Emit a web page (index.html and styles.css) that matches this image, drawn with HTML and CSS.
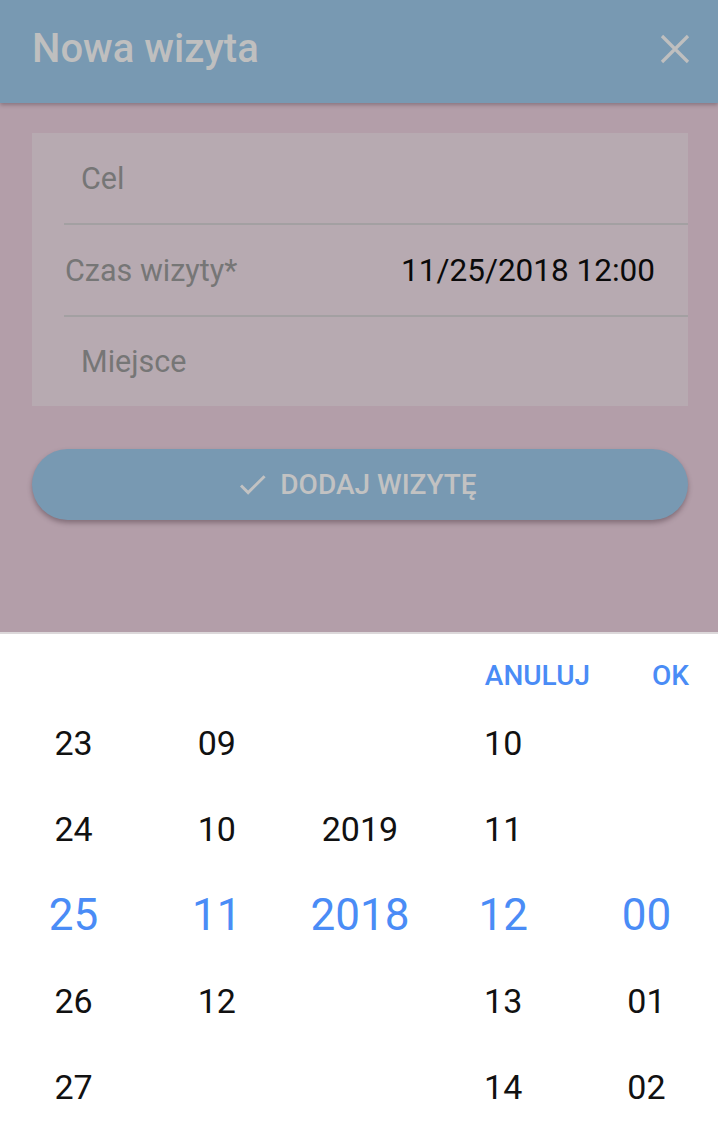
FILE: index.html
```html
<!DOCTYPE html>
<html lang="pl">
<head>
<meta charset="utf-8">
<title>Nowa wizyta</title>
<link rel="stylesheet" href="styles.css">
</head>
<body>
<div class="app">
  <header class="topbar">
    <h1 class="title">Nowa wizyta</h1>
    <svg class="close" viewBox="0 0 30 30" width="30" height="30" aria-hidden="true">
      <path d="M2 2 L28 28 M28 2 L2 28" stroke="currentColor" stroke-width="3.2" fill="none"/>
    </svg>
  </header>
  <main class="content">
    <section class="card">
      <div class="row"><span class="placeholder">Cel</span></div>
      <div class="divider"></div>
      <div class="row row-field"><span class="label">Czas wizyty*</span><span class="value">11/25/2018 12:00</span></div>
      <div class="divider"></div>
      <div class="row row-last"><span class="placeholder">Miejsce</span></div>
    </section>
    <button class="submit" type="button">
      <svg class="check" viewBox="0 0 24 24" width="35" height="35" aria-hidden="true">
        <path d="M9 16.17L4.83 12l-1.42 1.41L9 19 21 7l-1.41-1.41z" fill="currentColor"/>
      </svg>
      <span>DODAJ WIZYTĘ</span>
    </button>
  </main>
  <section class="sheet">
    <div class="actions">
      <span class="action">ANULUJ</span>
      <span class="action">OK</span>
    </div>
    <div class="picker">
      <span class="cell">23</span><span class="cell">09</span><span class="cell"></span><span class="cell">10</span><span class="cell"></span>
      <span class="cell">24</span><span class="cell">10</span><span class="cell">2019</span><span class="cell">11</span><span class="cell"></span>
      <span class="cell sel">25</span><span class="cell sel">11</span><span class="cell sel">2018</span><span class="cell sel">12</span><span class="cell sel">00</span>
      <span class="cell">26</span><span class="cell">12</span><span class="cell"></span><span class="cell">13</span><span class="cell">01</span>
      <span class="cell">27</span><span class="cell"></span><span class="cell"></span><span class="cell">14</span><span class="cell">02</span>
    </div>
  </section>
</div>
</body>
</html>
```
FILE: styles.css
```css
* { box-sizing: border-box; }
html, body { margin: 0; padding: 0; }
body {
  width: 718px;
  height: 1148px;
  overflow: hidden;
  font-family: Roboto, "Noto Sans", sans-serif;
  background: #b39ea9;
}
.app {
  display: flex;
  flex-direction: column;
  height: 1148px;
}
.topbar {
  height: 103px;
  flex: none;
  background: #7899b2;
  display: flex;
  align-items: center;
  justify-content: space-between;
  padding: 0 28px 0 32px;
  box-shadow: 0 2px 4px rgba(60, 40, 50, 0.35);
  position: relative;
  z-index: 1;
}
.title {
  margin: 0 0 6px;
  font-size: 40px;
  font-weight: 500;
  color: #bfbfbf;
}
.close {
  color: #bfbfbf;
  margin-bottom: 6px;
}
.content {
  flex: 1;
  padding: 30px 30px 0 32px;
}
.card {
  background: #b7aab1;
  display: flex;
  flex-direction: column;
}
.row {
  height: 90px;
  display: flex;
  align-items: center;
  font-size: 30.5px;
  padding: 0 33px 0 49px;
}
.row-field {
  padding-left: 33px;
  justify-content: space-between;
}
.row-last { height: 89px; }
.placeholder, .label { color: #767676; }
.value { color: #0a0a0a; font-size: 31.5px; }
.divider {
  height: 2px;
  margin-left: 32px;
  background: #a3a0a2;
}
.submit {
  margin-top: 43px;
  width: 100%;
  height: 71px;
  border: 0;
  border-radius: 36px;
  background: #7899b2;
  color: #c2c2c2;
  font-family: inherit;
  font-size: 28px;
  font-weight: 500;
  display: flex;
  align-items: center;
  justify-content: center;
  gap: 10px;
  padding: 0;
  box-shadow: 0 3px 5px rgba(60, 40, 50, 0.4);
}
.check { margin-left: -8px; }
.sheet {
  height: 516px;
  flex: none;
  background: #ffffff;
  border-top: 2px solid #dcd8da;
}
.actions {
  display: flex;
  justify-content: flex-end;
  gap: 62px;
  padding: 26px 29px 0 0;
  height: 66px;
}
.action {
  color: #4a8cf6;
  font-size: 28px;
  font-weight: 500;
  line-height: 32px;
}
.picker {
  display: grid;
  grid-template-columns: repeat(5, 1fr);
  grid-auto-rows: 86px;
  padding-left: 2px;
}
.cell {
  display: flex;
  align-items: center;
  justify-content: center;
  font-size: 34px;
  color: #111;
}
.cell.sel {
  font-size: 44px;
  color: #4a8cf6;
}
```
